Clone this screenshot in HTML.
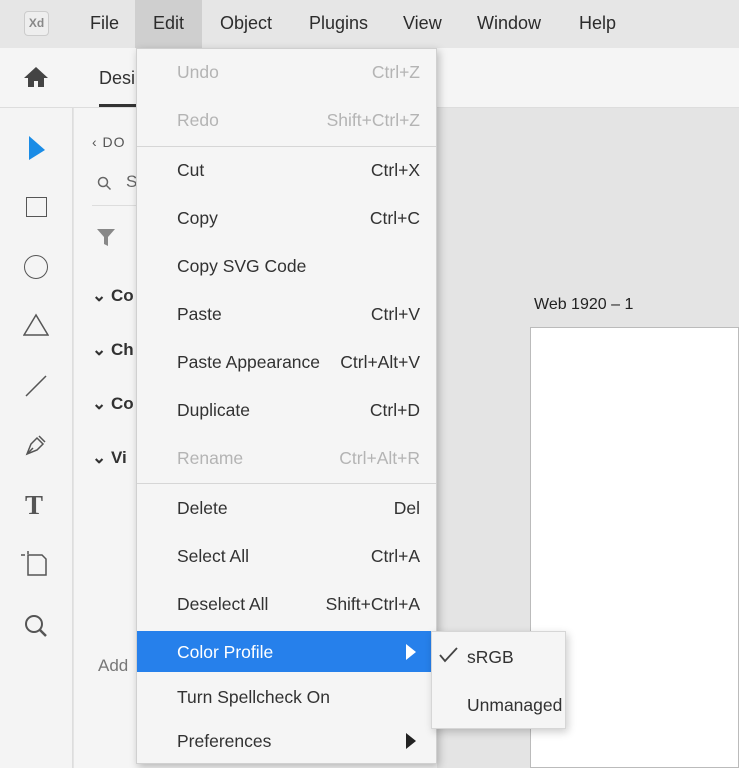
<!DOCTYPE html>
<html><head><style>
*{margin:0;padding:0;box-sizing:border-box}
body{width:739px;height:768px;overflow:hidden;background:#e4e4e4;font-family:"Liberation Sans",sans-serif;position:relative;color:#323232}
.abs{position:absolute}
.mb{left:0;top:0;width:739px;height:48px;background:#e6e6e6}
.mb span{position:absolute;top:13px;font-size:18px;color:#2c2c2c}
.tb{left:0;top:48px;width:739px;height:60px;background:#f5f5f5;border-bottom:1px solid #ddd}
.tools{left:0;top:108px;width:73px;height:660px;background:#f4f4f4;border-right:1px solid #ddd}
.panel{left:74px;top:108px;width:363px;height:660px;background:#f5f5f5}
.menu{left:136px;top:48px;width:301px;height:716px;background:#f5f5f5;border:1px solid #d0d0d0;box-shadow:2px 3px 8px rgba(0,0,0,.25)}
.it{position:absolute;left:0;width:299px;height:42px;font-size:17.5px;line-height:42px}
.it .l{position:absolute;left:40px}
.it .r{position:absolute;right:16px}
.dis{color:#b4b4b4}
.sep{position:absolute;left:0;width:299px;height:1px;background:#d6d6d6}
.sub{left:431px;top:631px;width:135px;height:98px;background:#f5f5f5;border:1px solid #d6d6d6;box-shadow:2px 3px 8px rgba(0,0,0,.2)}
</style></head><body>
<div class="abs mb">
<div class="abs" style="left:24px;top:11px;width:25px;height:25px;border:1px solid #ccc;border-radius:4px;background:#eee;font-size:12px;color:#888;text-align:center;line-height:23px;font-weight:bold">Xd</div>
<span style="left:90px">File</span>
<div class="abs" style="left:135px;top:0;width:67px;height:48px;background:#cfcfcf"></div>
<span style="left:153px">Edit</span>
<span style="left:220px">Object</span>
<span style="left:309px">Plugins</span>
<span style="left:403px">View</span>
<span style="left:477px">Window</span>
<span style="left:579px">Help</span>
</div>
<div class="abs tb">
<svg class="abs" style="left:23px;top:18px" width="26" height="22" viewBox="0 0 26 22"><path d="M13 1L1 12h4v9h6v-6h4v6h6v-9h4z" fill="#444"/></svg>
<span class="abs" style="left:99px;top:20px;font-size:18px">Desi</span>
<div class="abs" style="left:99px;top:56px;width:40px;height:3px;background:#333"></div>
</div>
<div class="abs tools">
<svg class="abs" style="left:27px;top:26px" width="20" height="28"><path d="M2 2L18 16L2 26z" fill="#1a8ce6"/></svg>
<div class="abs" style="left:26px;top:89px;width:21px;height:20px;border:1.5px solid #555"></div>
<div class="abs" style="left:24px;top:147px;width:24px;height:24px;border:1.5px solid #555;border-radius:50%"></div>
<svg class="abs" style="left:23px;top:205px" width="26" height="24"><path d="M13 2L1 22h24z" fill="none" stroke="#555" stroke-width="1.5"/></svg>
<svg class="abs" style="left:24px;top:266px" width="24" height="24"><path d="M2 22L22 2" stroke="#555" stroke-width="1.5"/></svg>
<svg class="abs" style="left:24px;top:325px" width="24" height="24"><path d="M3 21l4-10 6-6 6 6-6 6zM3 21l6-6M15 3l6 6" fill="none" stroke="#555" stroke-width="1.5"/></svg>
<span class="abs" style="left:25px;top:382px;font-family:'Liberation Serif',serif;font-weight:bold;font-size:27px;color:#555">T</span>
<svg class="abs" style="left:20px;top:551px" width="30" height="28" style=""></svg>
<svg class="abs" style="left:20px;top:443px" width="30" height="28"><path d="M8 4h14l4 4v16H8z" fill="none" stroke="#555" stroke-width="1.5"/><path d="M1 4h4M8 0v3" stroke="#555" stroke-width="1.5"/></svg>
<svg class="abs" style="left:24px;top:506px" width="26" height="26"><circle cx="10" cy="10" r="8" fill="none" stroke="#555" stroke-width="2"/><path d="M16 16l6 6" stroke="#555" stroke-width="2.5"/></svg>
</div>
<div class="abs panel">
<span class="abs" style="left:18px;top:26px;font-size:14px;color:#555;letter-spacing:1px">‹ DO</span>
<svg class="abs" style="left:23px;top:68px" width="16" height="16"><circle cx="6" cy="6" r="4.5" fill="none" stroke="#666" stroke-width="1.5"/><path d="M9.5 9.5l4 4" stroke="#666" stroke-width="1.5"/></svg>
<span class="abs" style="left:52px;top:64px;font-size:17px;color:#666">S</span>
<div class="abs" style="left:18px;top:97px;width:50px;height:1px;background:#ddd"></div>
<svg class="abs" style="left:22px;top:120px" width="20" height="20"><path d="M1 1h18l-7 8v9l-4-2V9z" fill="#888"/></svg>
<span class="abs" style="left:56px;top:117px;font-size:18px;font-weight:bold">⋮</span>
<span class="abs" style="left:18px;top:178px;font-size:17px;font-weight:bold">⌄ Co</span>
<span class="abs" style="left:18px;top:232px;font-size:17px;font-weight:bold">⌄ Ch</span>
<span class="abs" style="left:18px;top:286px;font-size:17px;font-weight:bold">⌄ Co</span>
<span class="abs" style="left:18px;top:340px;font-size:17px;font-weight:bold">⌄ Vi</span>
<span class="abs" style="left:24px;top:548px;font-size:17px;color:#777">Add</span>
</div>
<div class="abs" style="left:437px;top:48px;width:302px;height:60px;background:#f5f5f5;border-bottom:1px solid #ddd"></div>
<span class="abs" style="left:534px;top:296px;font-size:16px;color:#222">Web 1920 – 1</span>
<div class="abs" style="left:530px;top:327px;width:209px;height:441px;background:#fff;border:1px solid #bbb"></div>
<div class="abs menu">
<div class="it dis" style="top:2px"><span class="l">Undo</span><span class="r">Ctrl+Z</span></div>
<div class="it dis" style="top:50px"><span class="l">Redo</span><span class="r">Shift+Ctrl+Z</span></div>
<div class="sep" style="top:97px"></div>
<div class="it" style="top:100px"><span class="l">Cut</span><span class="r">Ctrl+X</span></div>
<div class="it" style="top:148px"><span class="l">Copy</span><span class="r">Ctrl+C</span></div>
<div class="it" style="top:196px"><span class="l">Copy SVG Code</span></div>
<div class="it" style="top:244px"><span class="l">Paste</span><span class="r">Ctrl+V</span></div>
<div class="it" style="top:292px"><span class="l">Paste Appearance</span><span class="r">Ctrl+Alt+V</span></div>
<div class="it" style="top:340px"><span class="l">Duplicate</span><span class="r">Ctrl+D</span></div>
<div class="it dis" style="top:388px"><span class="l">Rename</span><span class="r">Ctrl+Alt+R</span></div>
<div class="sep" style="top:434px"></div>
<div class="it" style="top:438px"><span class="l">Delete</span><span class="r">Del</span></div>
<div class="it" style="top:486px"><span class="l">Select All</span><span class="r">Ctrl+A</span></div>
<div class="it" style="top:534px"><span class="l">Deselect All</span><span class="r">Shift+Ctrl+A</span></div>
<div class="it" style="top:582px;height:41px;background:#2680eb;color:#fff;width:294px"><span class="l">Color Profile</span><svg class="abs" style="left:269px;top:13px" width="10" height="16"><path d="M0 0L10 8L0 16z" fill="#fff"/></svg></div>
<div class="it" style="top:627px"><span class="l">Turn Spellcheck On</span></div>
<div class="it" style="top:671px"><span class="l">Preferences</span><svg class="abs" style="left:269px;top:13px" width="10" height="16"><path d="M0 0L10 8L0 16z" fill="#222"/></svg></div>
</div>
<div class="abs sub">
<svg class="abs" style="left:7px;top:15px" width="20" height="16"><path d="M1 8l5 6L18 1" fill="none" stroke="#444" stroke-width="1.8"/></svg>
<span class="abs" style="left:35px;top:15px;font-size:17.5px">sRGB</span>
<span class="abs" style="left:35px;top:63px;font-size:17.5px">Unmanaged</span>
</div>
</body></html>
